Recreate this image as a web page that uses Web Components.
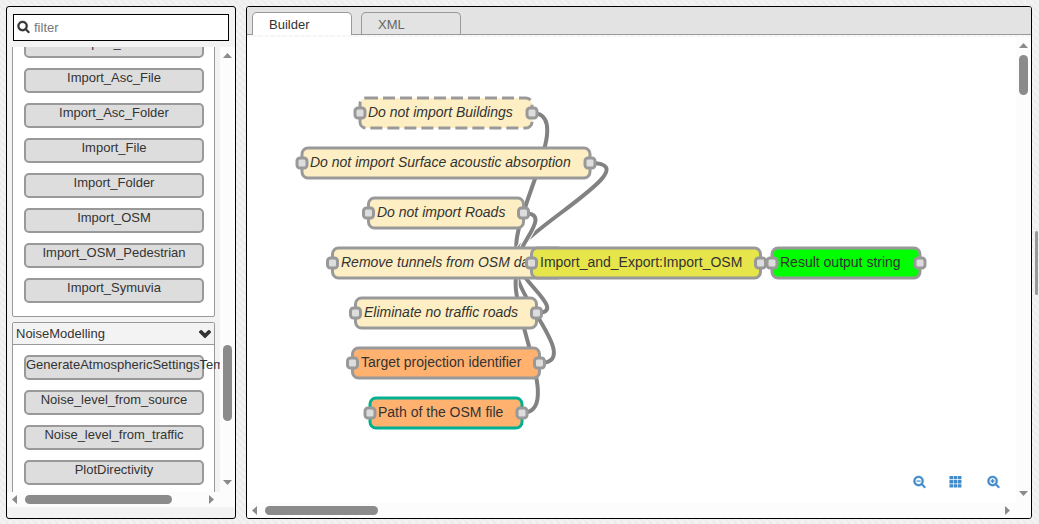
<!DOCTYPE html>
<html lang="en">
<head>
<meta charset="utf-8">
<title>Builder</title>
<style>
html,body{height:100%}
body{margin:0;overflow:hidden;font:13px "Liberation Sans",Arial,sans-serif;color:#333}
</style>
</head>
<body>
<app-shell>
  <palette-panel slot="palette">
    <palette-category>
      <palette-item>Export_Table</palette-item>
      <palette-item>Import_Asc_File</palette-item>
      <palette-item>Import_Asc_Folder</palette-item>
      <palette-item>Import_File</palette-item>
      <palette-item>Import_Folder</palette-item>
      <palette-item>Import_OSM</palette-item>
      <palette-item>Import_OSM_Pedestrian</palette-item>
      <palette-item>Import_Symuvia</palette-item>
    </palette-category>
    <palette-category label="NoiseModelling">
      <palette-item>GenerateAtmosphericSettingsTemplate</palette-item>
      <palette-item>Noise_level_from_source</palette-item>
      <palette-item>Noise_level_from_traffic</palette-item>
      <palette-item>PlotDirectivity</palette-item>
    </palette-category>
  </palette-panel>
  <work-space slot="workspace">
    <tab-item slot="tabs" active>Builder</tab-item>
    <tab-item slot="tabs">XML</tab-item>
    <flow-wires></flow-wires>
    <flow-node x="113" y="61" w="172" kind="optional" dashed>Do not import Buildings</flow-node>
    <flow-node x="55" y="111" w="288" kind="optional">Do not import Surface acoustic absorption</flow-node>
    <flow-node x="121.5" y="161" w="155" kind="optional">Do not import Roads</flow-node>
    <flow-node x="85.5" y="211" w="231" kind="optional">Remove tunnels from OSM data</flow-node>
    <flow-node x="108.5" y="261" w="181" kind="optional">Eliminate no traffic roads</flow-node>
    <flow-node x="105.5" y="311" w="187" kind="required">Target projection identifier</flow-node>
    <flow-node x="123" y="361" w="152" kind="required" changed>Path of the OSM file</flow-node>
    <flow-node x="284.5" y="211" w="229" kind="process">Import_and_Export:Import_OSM</flow-node>
    <flow-node x="525" y="211" w="148" kind="result">Result output string</flow-node>
  </work-space>
</app-shell>

<script>
function define(name, html, setup) {
  const template = document.createElement('template');
  template.innerHTML = html;
  customElements.define(name, class extends HTMLElement {
    constructor() {
      super();
      this.attachShadow({ mode: 'open' }).append(template.content.cloneNode(true));
    }
    connectedCallback() { if (setup) setup(this, this.shadowRoot); }
  });
}

const lens = 'M1216 832q0-185-131.5-316.5t-316.5-131.5-316.5 131.5-131.5 316.5 131.5 316.5 316.5 131.5 316.5-131.5 131.5-316.5zm512 832q0 52-38 90t-90 38q-54 0-90-38l-343-342q-179 124-399 124-143 0-273.5-55.5t-225-150-150-225-55.5-273.5 55.5-273.5 150-225 225-150 273.5-55.5 273.5 55.5 225 150 150 225 55.5 273.5q0 220-124 399l343 343q37 37 37 90z';
const icons = {
  search: `<path d="${lens}" stroke="currentColor" stroke-width="50"/>`,
  minus: `<path d="${lens}" stroke="currentColor" stroke-width="50"/><path d="M480 752h576v170H480z"/>`,
  plus: `<path d="${lens}" stroke="currentColor" stroke-width="50"/><path d="M660 560h216v164h164v216H876v164H660V940H496V724h164z"/>`,
  grid: [128, 704, 1280].map(y => [64, 640, 1216].map(x => `<rect x="${x}" y="${y}" width="500" height="460" rx="40"/>`).join('')).join(''),
  chevron: '<path stroke="currentColor" stroke-width="190" d="M1683 808l-742 741q-19 19-45 19t-45-19l-742-741q-19-19-19-45.5t19-45.5l166-165q19-19 45-19t45 19l531 531 531-531q19-19 45-19t45 19l166 165q19 19 19 45.5t-19 45.5z"/>'
};

define('ui-icon', `<style>
:host{display:block;width:14px;height:14px}
svg{display:block;width:100%;height:100%;fill:currentColor;overflow:visible}
</style><svg viewBox="0 0 1792 1792"></svg>`, (el, root) => {
  root.querySelector('svg').innerHTML = icons[el.getAttribute('name')];
});

define('app-shell', `<style>
:host{display:flex;box-sizing:border-box;width:1039px;height:524px;padding:6px 0 5px 6px;
 background-color:#f0f0f0;
 background-image:repeating-linear-gradient(45deg,#e9e9e980 0 2px,#f4f4f480 2px 5px),repeating-linear-gradient(-45deg,#eaeaea80 0 2px,#f4f4f480 2px 5px)}
.gap{width:10px;flex:none}
.rail{flex:1;display:flex;align-items:center;padding-left:3px}
.grip{width:3px;height:64px;border-radius:2px;background:#999;margin-top:1px}
</style><slot name="palette"></slot><div class="gap"></div><slot name="workspace"></slot><div class="rail"><div class="grip"></div></div>`);

define('scroll-bar', `<style>
:host{display:flex;box-sizing:border-box;background:#fcfcfc;align-items:center}
:host([dir-y]){flex-direction:column}
.track{flex:1;align-self:stretch;display:flex;justify-content:center}
:host(:not([dir-y])) .track{flex-direction:column}
.thumb{background:#8b8b8b;border-radius:4.5px}
svg{display:block;flex:none;fill:#8b8b8b}
</style><svg class="a"><path/></svg><div class="track"><div class="thumb"></div></div><svg class="b"><path/></svg>`, (el, root) => {
  const vertical = el.hasAttribute('dir-y');
  const thumb = root.querySelector('.thumb');
  const start = +el.getAttribute('start'), size = +el.getAttribute('size');
  const shapes = vertical ? ['M0 5L4.5 0L9 5Z', 'M0 0H9L4.5 5Z'] : ['M5 0V9L0 4.5Z', 'M0 0V9L5 4.5Z'];
  root.querySelectorAll('svg').forEach((s, i) => {
    s.setAttribute('width', vertical ? 9 : 5);
    s.setAttribute('height', vertical ? 5 : 9);
    s.firstChild.setAttribute('d', shapes[i]);
  });
  thumb.style.cssText = vertical ? `width:9px;height:${size}px;margin-top:${start}px` : `height:9px;width:${size}px;margin-left:${start}px`;
});

define('palette-panel', `<style>
:host{display:flex;flex-direction:column;box-sizing:border-box;width:230px;height:513px;flex:none;border:1px solid #000;border-radius:3px;background:#f3f3f3;overflow:hidden}
.filter{box-sizing:border-box;display:flex;align-items:center;gap:4px;width:216px;height:27px;margin:7px 0 6px 6px;padding-left:3px;border:1px solid #000;background:#fff;color:#777;flex:none}
.filter ui-icon{color:#333;width:13px;height:13px;margin-top:-2px}
.body{display:grid;grid-template-columns:213px 15px;grid-template-rows:445px 15px}
.view{overflow:hidden;padding-left:5px}
.list{margin-top:-25px;display:flex;flex-direction:column;gap:5px;width:203px}
.v{padding:6px 0 7px}
.h{padding:0 6px 0 5px}
.corner{background:#fcfcfc}
</style>
<div class="filter"><ui-icon name="search"></ui-icon><span>filter</span></div>
<div class="body"><div class="view"><div class="list"><slot></slot></div></div>
<scroll-bar class="v" dir-y start="287" size="76"></scroll-bar>
<scroll-bar class="h" start="8" size="147"></scroll-bar><div class="corner"></div></div>`);

define('palette-category', `<style>
:host{display:block;box-sizing:border-box;border:1px solid #999;border-radius:2px;background:#fff}
header{display:flex;justify-content:space-between;align-items:center;height:21px;padding:0 3px 0 3px;border-bottom:1px solid #999;background:#f3f3f3}
header ui-icon{width:12px;height:12px;margin-top:-2px}
.items{display:flex;flex-direction:column;gap:10px;padding:10px 11px 13px}
</style><header><span></span><ui-icon name="chevron"></ui-icon></header><div class="items"><slot></slot></div>`, (el, root) => {
  const label = el.getAttribute('label');
  if (label) root.querySelector('span').textContent = label;
  else root.querySelector('header').remove();
});

define('palette-item', `<style>
:host{display:block;box-sizing:border-box;width:180px;height:25px;border:2px solid #999;border-radius:5px;background:#ddd;line-height:15px;text-align:center;white-space:nowrap}
</style><slot></slot>`);

define('tab-item', `<style>
:host{display:block;box-sizing:border-box;width:100px;height:22px;padding-left:16px;border:1px solid #999;border-bottom:0;border-radius:5px 5px 0 0;background:#e3e3e3;color:#666;line-height:23px}
:host([active]){height:23px;background:#fff;color:#333}
</style><slot></slot>`);

define('work-space', `<style>
:host{display:flex;flex-direction:column;box-sizing:border-box;width:786px;height:513px;flex:none;border:1px solid #000;border-radius:3px;background:#fff;overflow:hidden}
.bar{display:flex;gap:9px;height:28px;padding:5px 0 0 5px;box-sizing:border-box;flex:none;background:linear-gradient(#999,#999) 0 100%/100% 1px no-repeat #e3e3e3}
.strip{height:2px;background:repeating-linear-gradient(90deg,#f5f5f5 0 3px,#fafafa 3px 6px)}
.body{display:grid;grid-template-columns:769px 15px;grid-template-rows:466px 15px}
.canvas{position:relative;overflow:hidden;background:#fff}
.tools{position:absolute;right:16px;bottom:15px;display:flex;gap:24px;color:#428bca}
.tools ui-icon{width:13px;height:13px}
.tools ui-icon:nth-child(2){margin:0 1px 0 -1px}
.v{padding:6px 0 7px}
.h{padding:0 6px 0 5px}
.corner{background:#fcfcfc}
</style>
<div class="bar"><slot name="tabs"></slot></div><div class="strip"></div>
<div class="body"><div class="canvas"><slot></slot>
<div class="tools"><ui-icon name="minus"></ui-icon><ui-icon name="grid"></ui-icon><ui-icon name="plus"></ui-icon></div></div>
<scroll-bar class="v" dir-y start="7" size="40"></scroll-bar>
<scroll-bar class="h" start="8" size="113"></scroll-bar><div class="corner"></div></div>`);

/* Wires run from an output port to an input port: [x1, y1, x2, y2, control reach]. */
const wires = [
  [285, 76, 284.5, 226, 53], [343, 126, 284.5, 226, 75], [276.5, 176, 284.5, 226, 38],
  [316.5, 226, 284.5, 226, 37], [289.5, 276, 284.5, 226, 39], [292.5, 326, 284.5, 226, 53],
  [275, 376, 284.5, 226, 51], [513.5, 226, 525, 226, 8]
];
define('flow-wires', `<style>
:host{display:block;position:absolute;inset:0}
svg{display:block;width:100%;height:100%;fill:none}
.edge{stroke:#fff;stroke-width:6}
.line{stroke:#828282;stroke-width:4}
</style><svg></svg>`, (el, root) => {
  root.querySelector('svg').innerHTML = wires.map(([a, b, c, d, r]) => {
    const path = `M${a} ${b}C${a + r} ${b} ${c - r} ${d} ${c} ${d}`;
    return `<path class="edge" d="${path}"/><path class="line" d="${path}"/>`;
  }).join('');
});

define('flow-node', `<style>
:host{display:block;position:absolute;--fill:#fdefc3;font-size:14px}
:host([kind=optional]){font-style:italic}
:host([kind=required]){--fill:#ffb170}
:host([kind=process]){--fill:#e6e64b}
:host([kind=result]){--fill:#0f0}
svg{display:block;overflow:visible}
.box{fill:var(--fill);stroke:#999;stroke-width:3}
:host([changed]) .box{stroke:#00b090}
:host([dashed]) .box{stroke-dasharray:12 5}
.port{fill:#ddd;stroke:#999;stroke-width:3}
span{position:absolute;left:8px;top:6px;line-height:16px;white-space:nowrap}
</style><svg height="30"><rect class="box" height="30" rx="6"/></svg><span><slot></slot></span>
<svg class="ports" height="30" style="position:absolute;left:0;top:0"><rect class="port" y="10" width="10" height="10" rx="3"/><rect class="port" y="10" width="10" height="10" rx="3"/></svg>`, (el, root) => {
  const w = +el.getAttribute('w'), x = +el.getAttribute('x');
  /* The host sits on a whole pixel; the half-pixel remainder goes into the SVG shapes. */
  const rest = x - Math.floor(x);
  el.style.left = Math.floor(x) + 'px';
  el.style.top = el.getAttribute('y') + 'px';
  root.querySelector('span').style.left = 8 + Math.ceil(rest) + 'px';
  root.querySelectorAll('svg').forEach(s => s.setAttribute('width', w));
  const box = root.querySelector('.box');
  box.setAttribute('x', rest);
  box.setAttribute('width', w);
  const ports = root.querySelectorAll('.port');
  ports[0].setAttribute('x', rest - 5);
  ports[1].setAttribute('x', rest + w - 5);
});
</script>
</body>
</html>
